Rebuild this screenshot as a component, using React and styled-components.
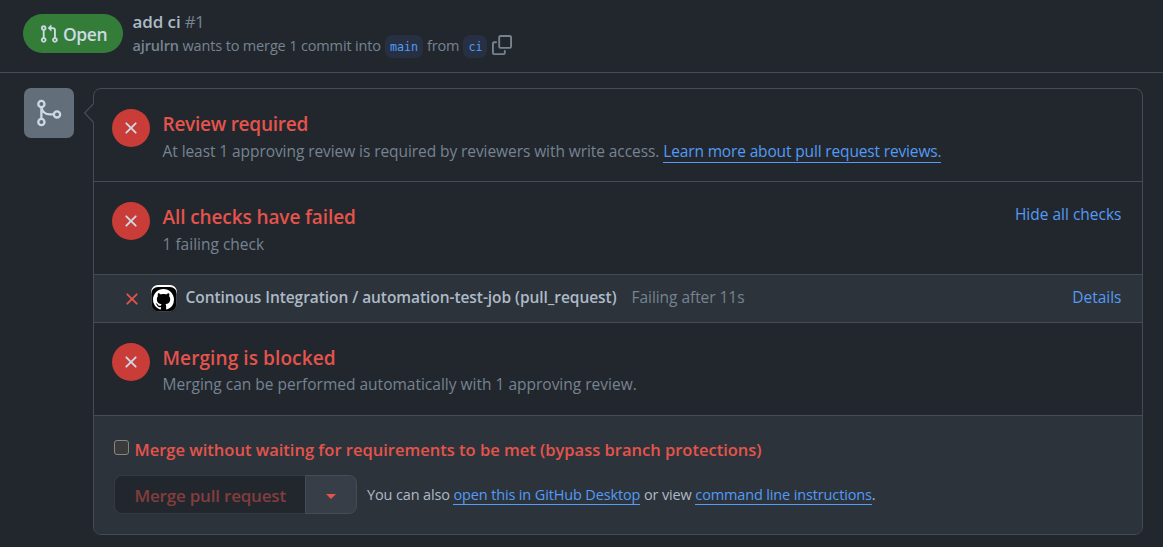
import React from "react";
import styled, { createGlobalStyle } from "styled-components";

const GlobalStyle = createGlobalStyle`
  *, *::before, *::after { box-sizing: border-box; }
  body {
    margin: 0;
    background: #22272e;
    color: #adbac7;
    font-family: "Open Sans", "Noto Sans", sans-serif;
  }
`;

const Page = styled.div`
  height: 547px;
  overflow: hidden;
`;

const Header = styled.header`
  display: flex;
  height: 73px;
  padding: 11px 0 0 23px;
  border-bottom: 1px solid #444c56;
`;

const StateBadge = styled.span`
  display: flex;
  align-items: center;
  gap: 4px;
  width: 100px;
  height: 39px;
  margin-top: 3px;
  padding: 1px 0 0 16px;
  border-radius: 20px;
  background: #347d39;
  color: #cdd9e5;
  font-size: 17.5px;
  font-weight: 600;
  letter-spacing: -0.4px;
`;

const HeaderText = styled.div`
  margin-left: 9.5px;
`;

const Title = styled.div`
  height: 22px;
  line-height: 22px;
  font-size: 17px;
  font-weight: 600;
  letter-spacing: -0.1px;
`;

const IssueNumber = styled.span`
  color: #768390;
  font-weight: 400;
  letter-spacing: -0.9px;
`;

const Meta = styled.div`
  display: flex;
  align-items: center;
  height: 24px;
  color: #768390;
  font-size: 14.5px;
  letter-spacing: ${(p) => p.$ls || 0}px;
  white-space: pre;

  strong { font-weight: 600; }
`;

const Branch = styled.span`
  display: flex;
  align-items: center;
  height: 23px;
  margin: 3px 4px 0;
  padding: 0 5px;
  border-radius: 7px;
  background: #263042;
  color: #539bf5;
  font-family: "DejaVu Sans Mono", monospace;
  font-size: 11.7px;
  letter-spacing: 0;
`;

const Icon = styled.svg`
  display: block;
  flex: none;
  width: ${(p) => p.$size || 20}px;
  height: ${(p) => p.$size || 20}px;
  fill: currentColor;
`;

const CopyButton = styled.span`
  display: flex;
  margin-left: 1px;
`;

const Timeline = styled.main`
  display: flex;
  padding: 15px 20px 0 24px;
`;

const MergeBadge = styled.div`
  display: flex;
  align-items: center;
  justify-content: center;
  flex: none;
  width: 50px;
  height: 50px;
  border-radius: 7px;
  background: #636e7b;
  color: #cdd9e5;
`;

const Panel = styled.section`
  position: relative;
  flex: 1;
  height: 447px;
  margin-left: 19px;
  border: 1px solid #444c56;
  border-radius: 8px;
`;

const Pointer = styled.svg`
  position: absolute;
  left: -10px;
  top: 14px;
  width: 10px;
  height: 20px;
`;

const Section = styled.div`
  display: flex;
  height: 93px;
  padding: 20px 20.5px 0 18px;
  border-bottom: 1px solid #444c56;
`;

const StatusCircle = styled.div`
  display: flex;
  align-items: center;
  justify-content: center;
  flex: none;
  width: 38px;
  height: 38px;
  border-radius: 50%;
  background: #c93c37;
  color: #cdd9e5;
`;

const SectionText = styled.div`
  flex: 1;
  margin-left: 12.5px;
  padding-top: 3px;
`;

const Heading = styled.h3`
  margin: 0;
  color: #e5534b;
  font-size: 19px;
  font-weight: 600;
  line-height: 25px;
  letter-spacing: ${(p) => p.$ls || 0}px;
`;

const Description = styled.p`
  margin: ${(p) => (p.$tight ? 1 : 2)}px 0 0;
  color: #768390;
  font-size: 15.5px;
  line-height: 24px;
  letter-spacing: ${(p) => p.$ls || 0}px;
  white-space: nowrap;
`;

const Link = styled.a`
  color: #539bf5;
  border-bottom: ${(p) => (p.$underline ? "1px solid #539bf5" : "0")};
  letter-spacing: ${(p) => (p.$ls ? `${p.$ls}px` : "inherit")};
`;

const Toggle = styled.a`
  height: 24px;
  color: #539bf5;
  font-size: 15.5px;
  line-height: 24px;
`;

const CheckRow = styled.div`
  display: flex;
  align-items: center;
  height: 48px;
  padding: 0 20.5px 3px 28px;
  border-bottom: 1px solid #444c56;
  background: #2d333b;
  font-size: 15.5px;
`;

const FailMark = styled.span`
  display: flex;
  margin-top: 4px;
  color: #e5534b;
`;

const Avatar = styled.span`
  display: flex;
  align-items: center;
  justify-content: center;
  width: 26px;
  height: 27px;
  margin: 3px 9px 0 8.5px;
  padding-top: 2px;
  border-radius: 7px;
  background: #000;
  box-shadow: inset 0 2px 0 #fff, inset 0 0 0 1px #3a4149;
  color: #fff;
`;

const CheckName = styled.strong`
  font-weight: 600;
  font-size: 15.5px;
  letter-spacing: ${(p) => p.$ls || 0}px;
`;

const CheckTime = styled.span`
  flex: 1;
  margin-left: 15px;
  color: #768390;
  font-size: 15.5px;
  letter-spacing: ${(p) => p.$ls || 0}px;
`;

const Footer = styled.div`
  height: 118px;
  padding: 19px 0 0 20px;
  border-radius: 0 0 7px 7px;
  background: #2d333b;
`;

const Bypass = styled.label`
  display: flex;
  height: 28px;
  align-items: center;
  color: #e5534b;
  font-size: 16.5px;
  font-weight: 600;
`;

const Checkbox = styled.span`
  width: 15px;
  height: 15px;
  margin: 0 5.5px 4px 0;
  border: 1px solid #858585;
  border-radius: 3px;
  background: #3b3b3b;
`;

const Actions = styled.div`
  display: flex;
  align-items: center;
  margin-top: 12px;
`;

const MergeButton = styled.span`
  width: 191px;
  height: 39px;
  padding-left: 19.5px;
  border: 1px solid #343a42;
  border-right: 0;
  border-radius: 8px 0 0 8px;
  background: #22272e;
  color: #843d3d;
  font-size: 17px;
  font-weight: 600;
  line-height: 39px;
  letter-spacing: -0.2px;
`;

const MenuButton = styled.span`
  display: flex;
  align-items: center;
  justify-content: center;
  width: 52px;
  height: 39px;
  padding-top: 4px;
  border: 1px solid #444c56;
  border-radius: 0 8px 8px 0;
  background: #373e47;
`;

const Caret = styled.span`
  border: 5px solid transparent;
  border-top-color: #e5534b;
  border-bottom: 0;
`;

const Hint = styled.span`
  margin-left: 10px;
  font-size: 14.5px;
  line-height: 20px;
  letter-spacing: -0.14px;
`;

const paths = {
  pull: "M7.177 3.073L9.573.677A.25.25 0 0110 .854v4.792a.25.25 0 01-.427.177L7.177 3.427a.25.25 0 010-.354zM3.75 2.5a.75.75 0 100 1.5.75.75 0 000-1.5zm-2.25.75a2.25 2.25 0 113 2.122v5.256a2.251 2.251 0 11-1.5 0V5.372A2.25 2.25 0 011.5 3.25zM11 2.5h-1V4h1a1 1 0 011 1v5.628a2.251 2.251 0 101.5 0V5A2.5 2.5 0 0011 2.5zm1 10.25a.75.75 0 111.5 0 .75.75 0 01-1.5 0zM3.75 12a.75.75 0 100 1.5.75.75 0 000-1.5z",
  x: "M3.72 3.72a.75.75 0 011.06 0L8 6.94l3.22-3.22a.75.75 0 111.06 1.06L9.06 8l3.22 3.22a.75.75 0 11-1.06 1.06L8 9.06l-3.22 3.22a.75.75 0 01-1.06-1.06L6.94 8 3.72 4.78a.75.75 0 010-1.06z",
  copy: "M0 6.75C0 5.784.784 5 1.75 5h1.5a.75.75 0 010 1.5h-1.5a.25.25 0 00-.25.25v7.5c0 .138.112.25.25.25h7.5a.25.25 0 00.25-.25v-1.5a.75.75 0 011.5 0v1.5A1.75 1.75 0 019.25 16h-7.5A1.75 1.75 0 010 14.25v-7.5zM5 1.75C5 .784 5.784 0 6.75 0h7.5C15.216 0 16 .784 16 1.75v7.5A1.75 1.75 0 0114.25 11h-7.5A1.75 1.75 0 015 9.25v-7.5zm1.75-.25a.25.25 0 00-.25.25v7.5c0 .138.112.25.25.25h7.5a.25.25 0 00.25-.25v-7.5a.25.25 0 00-.25-.25h-7.5z",
  github: "M8 0C3.58 0 0 3.58 0 8c0 3.54 2.29 6.53 5.47 7.59.4.07.55-.17.55-.38 0-.19-.01-.82-.01-1.49-2.01.37-2.53-.49-2.69-.94-.09-.23-.48-.94-.82-1.13-.28-.15-.68-.52-.01-.53.63-.01 1.08.58 1.23.82.72 1.21 1.87.87 2.33.66.07-.52.28-.87.51-1.07-1.78-.2-3.64-.89-3.64-3.95 0-.87.31-1.59.82-2.15-.08-.2-.36-1.02.08-2.12 0 0 .67-.21 2.2.82.64-.18 1.32-.27 2-.27.68 0 1.36.09 2 .27 1.53-1.04 2.2-.82 2.2-.82.44 1.1.16 1.92.08 2.12.51.56.82 1.27.82 2.15 0 3.07-1.87 3.75-3.65 3.95.29.25.54.73.54 1.48 0 1.07-.01 1.93-.01 2.2 0 .21.15.46.55.38A8.013 8.013 0 0016 8c0-4.42-3.58-8-8-8z",
};

const Octicon = ({ name, size }) => (
  <Icon viewBox="0 0 16 16" $size={size} aria-hidden="true">
    <path fillRule="evenodd" d={paths[name]} />
  </Icon>
);

const MergeIcon = () => (
  <Icon viewBox="0 0 30 30" $size={30} aria-hidden="true">
    <g fill="none" stroke="currentColor" strokeWidth="2.3">
      <circle cx="7.4" cy="6" r="3.1" />
      <circle cx="7.4" cy="24" r="3.1" />
      <circle cx="23" cy="16.4" r="3.1" />
      <path d="M7.4 9.1V20.9M7.4 9.1C8.2 13.6 11.6 16.4 16 16.4H19.9" />
    </g>
  </Icon>
);

const Status = ({ title, titleLs, children, textLs, tight, action }) => (
  <Section>
    <StatusCircle><Octicon name="x" /></StatusCircle>
    <SectionText>
      <Heading $ls={titleLs}>{title}</Heading>
      <Description $ls={textLs} $tight={tight}>{children}</Description>
    </SectionText>
    {action}
  </Section>
);

export default function App() {
  return (
    <Page>
      <GlobalStyle />
      <Header>
        <StateBadge><Octicon name="pull" />Open</StateBadge>
        <HeaderText>
          <Title>add ci <IssueNumber>#1</IssueNumber></Title>
          <Meta $ls={-0.15}>
            <strong>ajrulrn</strong> wants to merge 1 commit into
            <Branch>main</Branch>from<Branch>ci</Branch>
            <CopyButton><Octicon name="copy" /></CopyButton>
          </Meta>
        </HeaderText>
      </Header>
      <Timeline>
        <MergeBadge><MergeIcon /></MergeBadge>
        <Panel>
          <Pointer viewBox="0 0 10 20">
            <path d="M10 0L0.7 10L10 20" fill="#22272e" stroke="#444c56" strokeWidth="1.2" />
          </Pointer>
          <Status title="Review required" titleLs={-0.25} textLs={-0.075}>
            At least 1 approving review is required by reviewers with write access.{" "}
            <Link $underline $ls={-0.15}>Learn more about pull request reviews.</Link>
          </Status>
          <Status title="All checks have failed" titleLs={-0.1} action={<Toggle>Hide all checks</Toggle>}>
            1 failing check
          </Status>
          <CheckRow>
            <FailMark><Octicon name="x" /></FailMark>
            <Avatar><Octicon name="github" size={21} /></Avatar>
            <CheckName $ls={-0.06}>Continous Integration / automation-test-job (pull_request)</CheckName>
            <CheckTime $ls={-0.05}>Failing after 11s</CheckTime>
            <Link>Details</Link>
          </CheckRow>
          <Status title="Merging is blocked" titleLs={0.1} tight>
            Merging can be performed automatically with 1 approving review.
          </Status>
          <Footer>
            <Bypass>
              <Checkbox role="checkbox" aria-checked="false" />
              Merge without waiting for requirements to be met (bypass branch protections)
            </Bypass>
            <Actions>
              <MergeButton>Merge pull request</MergeButton>
              <MenuButton><Caret /></MenuButton>
              <Hint>
                You can also <Link $underline>open this in GitHub Desktop</Link> or view{" "}
                <Link $underline>command line instructions</Link>.
              </Hint>
            </Actions>
          </Footer>
        </Panel>
      </Timeline>
    </Page>
  );
}
